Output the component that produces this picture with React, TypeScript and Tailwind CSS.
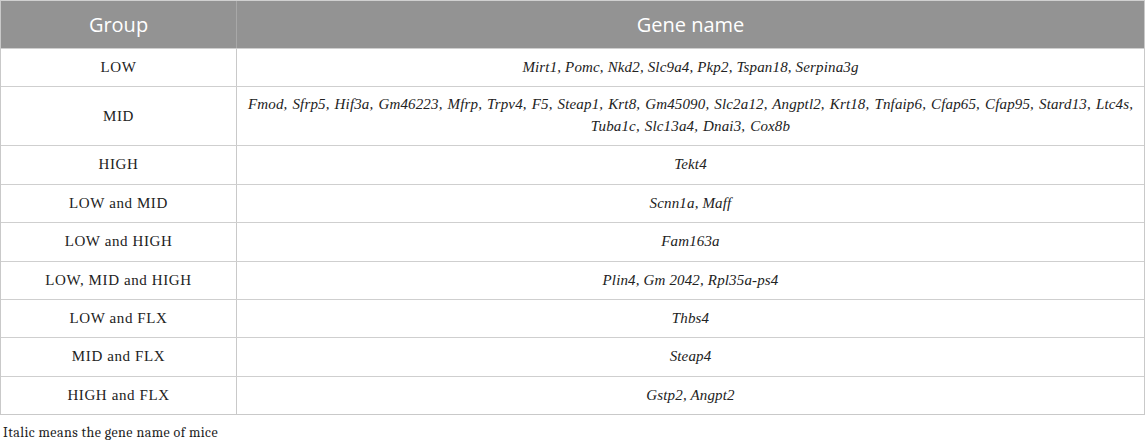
import React from "react";

const rows: { g: string; n: React.ReactNode; tall?: boolean }[] = [
  { g: "LOW", n: "Mirt1, Pomc, Nkd2, Slc9a4, Pkp2, Tspan18, Serpina3g" },
  {
    g: "MID",
    n: (
      <>
        Fmod, Sfrp5, Hif3a, Gm46223, Mfrp, Trpv4, F5, Steap1, Krt8, Gm45090, Slc2a12, Angptl2, Krt18, Tnfaip6, Cfap65, Cfap95, Stard13, Ltc4s,
        <br />
        Tuba1c, Slc13a4, Dnai3, Cox8b
      </>
    ),
    tall: true,
  },
  { g: "HIGH", n: "Tekt4" },
  { g: "LOW and MID", n: "Scnn1a, Maff" },
  { g: "LOW and HIGH", n: "Fam163a" },
  { g: "LOW, MID and HIGH", n: "Plin4, Gm 2042, Rpl35a-ps4" },
  { g: "LOW and FLX", n: "Thbs4" },
  { g: "MID and FLX", n: "Steap4" },
  { g: "HIGH and FLX", n: "Gstp2, Angpt2" },
];

export default function App() {
  return (
    <div className="w-[1145px] h-[440px] bg-white overflow-hidden font-['Liberation_Serif']">
      <div className="border border-[#c9c9c9] border-t-[#d0d0d0]">
        <div className="grid grid-cols-[236px_1fr] bg-[#939393] h-[47px] text-white font-['Open_Sans'] text-[20px]">
          <div className="flex items-center justify-center border-r border-[#a8a8a8] pt-[1px]">Group</div>
          <div className="flex items-center justify-center pt-[1px]">Gene name</div>
        </div>
        {rows.map((r, i) => (
          <div
            key={i}
            className={
              r.tall
                ? "grid grid-cols-[236px_1fr] border-t-[1.5px] border-[#cfcfcf] text-[#222] h-[59px]"
                : "grid grid-cols-[236px_1fr] border-t-[1.5px] border-[#cfcfcf] text-[#222] h-[38.4px]"
            }
          >
            <div className="flex items-center justify-center border-r border-[#c9c9c9] text-[15px] tracking-[0.04em] pb-[1px]">
              {r.g}
            </div>
            <div
              className={
                r.tall
                  ? "flex justify-center text-center italic text-[15px] tracking-[0.01em] [word-spacing:1.1px] px-2 items-start pt-[6px] leading-[22px]"
                  : "flex justify-center text-center italic text-[15px] tracking-[0.01em] px-2 items-center pb-[1px]"
              }
            >
              <div>{r.n}</div>
            </div>
          </div>
        ))}
      </div>
      <div className="mt-[7px] pl-[3px] font-serif text-[14px] text-[#222] tracking-[0.03em]">
        Italic means the gene name of mice
      </div>
    </div>
  );
}
